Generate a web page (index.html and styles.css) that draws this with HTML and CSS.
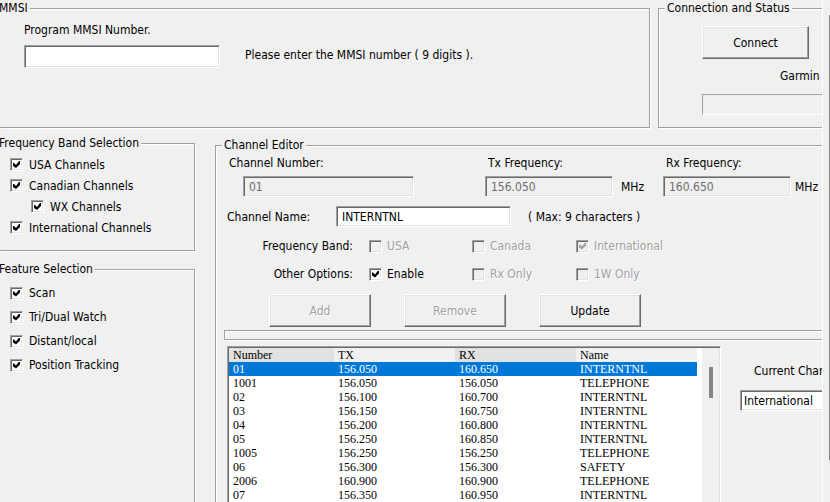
FILE: index.html
```html
<!DOCTYPE html>
<html lang="en">

<head>
    <meta charset="utf-8">
    <title>Channel Programming</title>
    <link rel="stylesheet" href="styles.css">
</head>

<body>
    <main class="pane">
        <div class="top">
            <fieldset class="group open-left mmsi">
                <legend>MMSI</legend>
                <label for="mmsi">Program MMSI Number.</label>
                <div class="mmsi-row">
                    <input type="text" class="field" id="mmsi" maxlength="9">
                    <span>Please enter the MMSI number ( 9 digits ).</span>
                </div>
            </fieldset>
            <fieldset class="group open-right connection">
                <legend>Connection and Status</legend>
                <button type="button" class="btn">Connect</button>
                <div class="device">Garmin VHF</div>
                <div class="status"></div>
            </fieldset>
        </div>

        <div class="bottom">
            <div class="side">
                <fieldset class="group open-left bands">
                    <legend>Frequency Band Selection</legend>
                    <label class="check"><input type="checkbox" checked>USA Channels</label>
                    <label class="check"><input type="checkbox" checked>Canadian Channels</label>
                    <label class="check sub"><input type="checkbox" checked>WX Channels</label>
                    <label class="check"><input type="checkbox" checked>International Channels</label>
                </fieldset>
                <fieldset class="group open-left features">
                    <legend>Feature Selection</legend>
                    <label class="check"><input type="checkbox" checked>Scan</label>
                    <label class="check"><input type="checkbox" checked>Tri/Dual Watch</label>
                    <label class="check"><input type="checkbox" checked>Distant/local</label>
                    <label class="check"><input type="checkbox" checked>Position Tracking</label>
                </fieldset>
            </div>

            <fieldset class="group open-right editor">
                <legend>Channel Editor</legend>
                <div class="numbers">
                    <label for="number">Channel Number:</label>
                    <label for="tx">Tx Frequency:</label>
                    <label for="rx">Rx Frequency:</label>
                    <div class="cell indent"><input type="text" class="field" id="number" value="01" disabled></div>
                    <div class="cell"><input type="text" class="field freq" id="tx" value="156.050" disabled>MHz</div>
                    <div class="cell tight"><input type="text" class="field freq" id="rx" value="160.650" disabled>MHz</div>
                </div>
                <div class="name-row">
                    <label for="name">Channel Name:</label>
                    <input type="text" class="field" id="name" value="INTERNTNL" maxlength="9">
                    <span>( Max: 9 characters )</span>
                </div>
                <div class="options">
                    <span class="caption">Frequency Band:</span>
                    <label class="check off"><input type="checkbox" disabled>USA</label>
                    <label class="check off"><input type="checkbox" disabled>Canada</label>
                    <label class="check off"><input type="checkbox" checked disabled>International</label>
                    <span class="caption">Other Options:</span>
                    <label class="check"><input type="checkbox" checked>Enable</label>
                    <label class="check off"><input type="checkbox" disabled>Rx Only</label>
                    <label class="check off"><input type="checkbox" disabled>1W Only</label>
                </div>
                <div class="buttons">
                    <button type="button" class="btn" disabled>Add</button>
                    <button type="button" class="btn" disabled>Remove</button>
                    <button type="button" class="btn">Update</button>
                </div>
                <div class="divider"></div>
                <div class="channels">
                    <div class="list">
                        <table>
                            <thead>
                                <tr><th class="first">Number</th><th>TX</th><th>RX</th><th>Name</th></tr>
                            </thead>
                            <tbody>
                                <tr class="selected"><td>01</td><td>156.050</td><td>160.650</td><td>INTERNTNL</td></tr>
                                <tr><td>1001</td><td>156.050</td><td>156.050</td><td>TELEPHONE</td></tr>
                                <tr><td>02</td><td>156.100</td><td>160.700</td><td>INTERNTNL</td></tr>
                                <tr><td>03</td><td>156.150</td><td>160.750</td><td>INTERNTNL</td></tr>
                                <tr><td>04</td><td>156.200</td><td>160.800</td><td>INTERNTNL</td></tr>
                                <tr><td>05</td><td>156.250</td><td>160.850</td><td>INTERNTNL</td></tr>
                                <tr><td>1005</td><td>156.250</td><td>156.250</td><td>TELEPHONE</td></tr>
                                <tr><td>06</td><td>156.300</td><td>156.300</td><td>SAFETY</td></tr>
                                <tr><td>2006</td><td>160.900</td><td>160.900</td><td>TELEPHONE</td></tr>
                                <tr><td>07</td><td>156.350</td><td>160.950</td><td>INTERNTNL</td></tr>
                            </tbody>
                        </table>
                        <div class="list-scroll"><div class="thumb"></div></div>
                    </div>
                    <div class="current">
                        <label for="current">Current Channel</label>
                        <select class="field" id="current">
                            <option>International</option>
                        </select>
                    </div>
                </div>
            </fieldset>
        </div>
    </main>
    <div class="page-scroll"><div class="page-thumb"></div></div>
</body>

</html>
```

FILE: styles.css
```css
* {
    box-sizing: border-box;
}

body {
    display: flex;
    height: 100vh;
    margin: 0;
    overflow: hidden;
    background-color: #f0f0f0;
    color: #000;
    font: 12px/16px "DejaVu Sans Condensed", Tahoma, sans-serif;
    white-space: nowrap;
}

input,
button,
select {
    margin: 0;
    color: inherit;
    font: inherit;
}

.pane {
    display: flex;
    flex: 1;
    flex-direction: column;
    min-width: 0;
    overflow: hidden;
    border-right: 1px solid #fff;
}

.page-scroll {
    width: 7px;
    padding-top: 15px;
}

.page-thumb {
    width: 1px;
    height: 445px;
    margin-left: auto;
    background-color: #858585;
}

/* etched group boxes, --inset is the left padding of the content */
.group {
    min-width: 0;
    margin: 0;
    padding: 0 0 0 var(--inset);
    border: 1px solid #a0a0a0;
    box-shadow: 1px 1px #fff, inset 1px 1px #fff;
}

.group legend {
    margin-left: calc(6px - var(--inset));
    padding: 0 2px;
    background-color: #f0f0f0;
}

.open-left {
    border-left: 0;
    box-shadow: 1px 1px #fff, inset 0 1px #fff;
}

.open-left legend {
    margin-left: calc(-3px - var(--inset));
}

.open-right {
    border-right: 0;
}

.top {
    display: grid;
    grid-template-columns: minmax(0, 1fr) 164px;
    gap: 8px;
    height: 128px;
    margin-bottom: 7px;
}

.mmsi {
    --inset: 24px;
    padding-top: 6px;
}

.mmsi-row {
    display: flex;
    gap: 25px;
    margin-top: 7px;
}

.mmsi-row .field {
    width: 196px;
    height: 23px;
}

.mmsi-row span {
    padding-top: 2px;
}

.connection {
    --inset: 43px;
    padding-top: 10px;
}

.btn {
    display: block;
    width: 102px;
    height: 33px;
    padding: 0;
    border: 1px solid;
    border-color: #fff #696969 #696969 #fff;
    background-color: #f0f0f0;
    box-shadow: inset -1px -1px #a0a0a0, inset 1px 1px #e3e3e3;
}

.connection .btn {
    width: 107px;
}

.device {
    margin: 9px 0 10px 78px;
}

.status {
    height: 21px;
    border: 1px solid;
    border-color: #a0a0a0 #fff #fff #a0a0a0;
    border-right: 0;
}

.field {
    height: 21px;
    padding: 0 5px;
    border: 1px solid;
    border-color: #a0a0a0 #fff #fff #a0a0a0;
    border-radius: 0;
    background-color: #fff;
    box-shadow: inset 1px 1px #696969, inset -1px -1px #e3e3e3;
    appearance: none;
}

.field:disabled {
    background-color: #f0f0f0;
    color: #6d6d6d;
    opacity: 1;
}

.check {
    display: flex;
    align-items: center;
    gap: 6px;
}

.check input {
    display: grid;
    place-content: center;
    width: 13px;
    height: 13px;
    border: 1px solid;
    border-color: #a0a0a0 #fff #fff #a0a0a0;
    background-color: #fff;
    box-shadow: inset 1px 1px #696969, inset -1px -1px #e3e3e3;
    appearance: none;
}

.check input:checked::before {
    width: 7px;
    height: 7px;
    background-color: #000;
    clip-path: polygon(0 2px, 1px 2px, 3px 4px, 6px 0, 7px 0, 7px 3px, 3px 7px, 0 5px);
    content: "";
}

.check input:disabled {
    background-color: #f0f0f0;
}

.check input:disabled::before {
    background-color: #a0a0a0;
}

.off,
.btn:disabled {
    color: #a0a0a0;
    text-shadow: 1px 1px #fff;
}

.bottom {
    display: grid;
    flex: 1;
    grid-template-columns: 195px minmax(0, 1fr);
    gap: 20px;
    min-height: 0;
}

.side {
    display: flex;
    flex-direction: column;
    gap: 10px;
}

.bands,
.features {
    --inset: 10px;
    display: grid;
    align-content: start;
}

.bands {
    grid-auto-rows: 21px;
    height: 116px;
    padding-top: 3px;
}

.sub {
    margin-left: 21px;
}

.features {
    flex: 1;
    grid-auto-rows: 24px;
    padding-top: 4px;
    border-bottom: 0;
}

.editor {
    --inset: 8px;
    margin-top: 2px;
    border-bottom: 0;
}

.numbers {
    display: grid;
    grid-template-columns: 256px 178px auto;
    row-gap: 5px;
    padding: 2px 0 0 5px;
}

.numbers label + label {
    padding-left: 3px;
}

.cell {
    display: flex;
    align-items: center;
    gap: 8px;
}

.indent {
    padding-left: 14px;
}

.indent .field {
    width: 171px;
}

.tight {
    gap: 4px;
}

.freq {
    width: 128px;
}

.name-row {
    display: flex;
    align-items: center;
    margin: 9px 0 11px 3px;
}

.name-row label {
    width: 109px;
}

.name-row .field {
    width: 175px;
    margin-right: 17px;
}

.options {
    display: grid;
    grid-template-columns: 129px 87px 88px auto;
    grid-auto-rows: 16px;
    gap: 12px 16px;
}

.options .check {
    gap: 5px;
}

.caption {
    text-align: right;
}

.buttons {
    display: flex;
    gap: 33px;
    margin: 12px 0 3px 45px;
}

.divider {
    height: 10px;
    border: 1px solid #a0a0a0;
    border-right: 0;
    box-shadow: 0 1px #fff, inset 1px 1px #fff;
}

.channels {
    display: flex;
    gap: 19px;
    margin: 6px 0 0 3px;
}

.list {
    display: flex;
    flex: none;
    justify-content: space-between;
    width: 494px;
    height: 180px;
    padding: 1px;
    border: 1px solid;
    border-color: #a0a0a0 #fff #fff #a0a0a0;
    background-color: #fff;
    box-shadow: inset 1px 1px #696969, inset -1px -1px #e3e3e3;
}

table {
    width: 468px;
    height: 154px;
    border-collapse: collapse;
    table-layout: fixed;
    font: 12px/14px "Liberation Serif", "Times New Roman", serif;
}

th,
td {
    height: 14px;
    padding: 0 4px;
    font-weight: normal;
    text-align: left;
}

.first {
    width: 105px;
}

th {
    background-color: #f0f0f0;
}

th:nth-child(odd) {
    background-color: #e1e1e1;
}

.selected {
    background-color: #0078d7;
    color: #fff;
}

.list-scroll {
    width: 17px;
    padding: 19px 6px 0 7px;
    background-color: #f0f0f0;
}

.thumb {
    height: 31px;
    background-color: #858585;
}

.current label {
    display: block;
    margin: 17px 0 11px 14px;
}

.current .field {
    display: block;
    width: 150px;
    padding: 0 3px;
}
```
